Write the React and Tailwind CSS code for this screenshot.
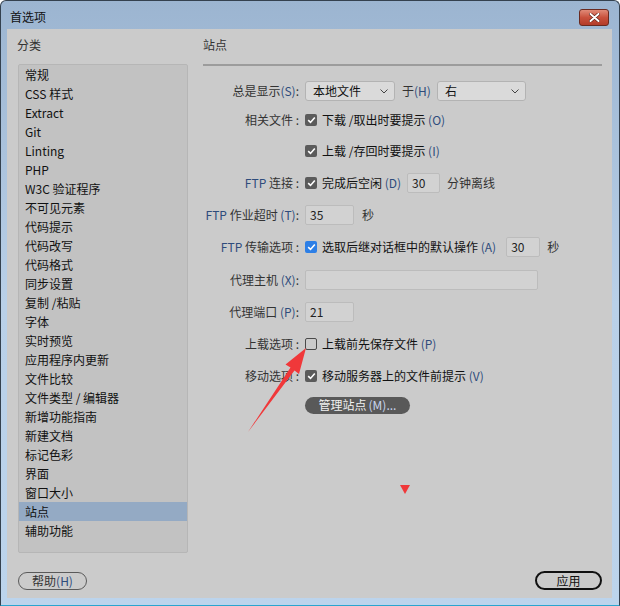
import React from "react";

const FONT = { fontFamily: '"Noto Sans CJK SC", "Noto Sans", sans-serif' };

const items = [
  "常规", "CSS 样式", "Extract", "Git", "Linting", "PHP", "W3C 验证程序", "不可见元素",
  "代码提示", "代码改写", "代码格式", "同步设置", "复制 /粘贴", "字体", "实时预览",
  "应用程序内更新", "文件比较", "文件类型 / 编辑器", "新增功能指南", "新建文档",
  "标记色彩", "界面", "窗口大小", "站点", "辅助功能",
];

function M({ children }) {
  return <span className="text-[#2e4c7c]">{children}</span>;
}

function Check({ kind = "dark" }) {
  if (kind === "empty") {
    return <span className="w-[12px] h-[12px] rounded-[2px] border border-[#4a4a4a] shrink-0" />;
  }
  const bg = kind === "blue" ? "bg-[#2d7fe6]" : "bg-[#5b5b5b]";
  return (
    <span className={`w-[12px] h-[12px] rounded-[2px] ${bg} shrink-0 flex items-center justify-center`}>
      <svg width="9" height="8" viewBox="0 0 9 8">
        <path d="M1.2 4.2 L3.5 6.4 L7.8 1.4" fill="none" stroke="#fff" strokeWidth="1.6" />
      </svg>
    </span>
  );
}

function Select({ w, text }) {
  return (
    <div className={`${w} h-[20px] rounded-[3px] border border-[#b3b3b3] bg-[#dadada] flex items-center justify-between pl-[7px] pr-[6px]`}>
      <span className="text-[12px] text-[#111]">{text}</span>
      <svg width="8" height="5" viewBox="0 0 8 5">
        <path d="M0.5 0.5 L4 4 L7.5 0.5" fill="none" stroke="#444" strokeWidth="1" />
      </svg>
    </div>
  );
}

function Input({ w, text = "" }) {
  return (
    <div className={`${w} h-[20px] rounded-[2px] border border-[#bcbcbc] bg-[#d2d2d2] flex items-center pl-[4px]`}>
      <span className="text-[12px] text-[#222]">{text}</span>
    </div>
  );
}

function Row({ h, label, children }) {
  return (
    <div className={`${h} flex items-center`}>
      <div className="w-[97px] text-right text-[12px] text-[#333] whitespace-nowrap pr-[1px]">{label}</div>
      <div className="ml-[5px] flex items-center text-[12px] text-[#111] whitespace-nowrap">{children}</div>
    </div>
  );
}

export default function App() {
  return (
    <div
      style={FONT}
      className="relative w-[620px] h-[606px] overflow-hidden rounded-t-[6px] border border-[#34414f] border-b-[#2aa5cf] bg-gradient-to-b from-[#9cb5d1] via-[#b9d0e8] to-[#bcd4ec] flex flex-col"
    >
      {/* title bar */}
      <div className="h-[28px] shrink-0 flex items-center justify-between pl-[9px] pr-[10px] pt-[4px]">
        <span className="text-[12px] text-[#111]">首选项</span>
        <div className="w-[30px] h-[17px] rounded-[3px] border border-[#6a2a20] bg-gradient-to-b from-[#e08a78] via-[#c9513d] to-[#b23c2a] flex items-center justify-center">
          <svg width="11" height="9" viewBox="0 0 11 9">
            <path d="M1.5 1 L9.5 8 M9.5 1 L1.5 8" stroke="#5a1a12" strokeWidth="3.2" strokeLinecap="round" />
            <path d="M1.5 1 L9.5 8 M9.5 1 L1.5 8" stroke="#fff" strokeWidth="2" strokeLinecap="round" />
          </svg>
        </div>
      </div>

      {/* content */}
      <div className="flex-1 ml-[6px] mr-[7px] mb-[7px] bg-[#cbcbcb] flex flex-col pt-[8px]">
        <div className="flex">
          {/* left */}
          <div className="w-[180px] pl-[10px] flex flex-col">
            <div className="h-[16px] leading-[16px] text-[12px] text-[#333]">分类</div>
            <div className="mt-[11px] ml-[1px] w-[170px] h-[489px] border border-[#b6b6b6] rounded-[2px] bg-[#c2c2c2] flex flex-col">
              {items.map((t) => (
                <div
                  key={t}
                  className={`h-[19px] shrink-0 flex items-center pl-[6px] text-[12px] text-[#111] ${t === "站点" ? "bg-[#94aac4]" : ""}`}
                >
                  {t}
                </div>
              ))}
            </div>
          </div>

          {/* right */}
          <div className="ml-[16px] w-[399px] flex flex-col">
            <div className="h-[16px] leading-[16px] text-[12px] text-[#333]">站点</div>
            <div className="mt-[11px] h-[2px] bg-[#9c9c9c]" />
            <div className="mt-[12px] flex flex-col">
              <Row h="h-[26px]" label={<>总是显示<M>(S)</M>:</>}>
                <Select w="w-[90px]" text="本地文件" />
                <span className="ml-[7px] mr-[6px] text-[#333]">于<M>(H)</M></span>
                <Select w="w-[89px]" text="右" />
              </Row>
              <Row h="h-[32px]" label="相关文件 :">
                <Check />
                <span className="ml-[5px]">下载 /取出时要提示 <M>(O)</M></span>
              </Row>
              <Row h="h-[30px]" label="">
                <Check />
                <span className="ml-[5px]">上载 /存回时要提示 <M>(I)</M></span>
              </Row>
              <Row h="h-[34px]" label={<><span className="text-[#2e4c7c]">FTP</span> 连接 :</>}>
                <Check />
                <span className="ml-[5px]">完成后空闲 <M>(D)</M></span>
                <div className="ml-[6px]"><Input w="w-[33px]" text="30" /></div>
                <span className="ml-[7px] text-[#333]">分钟离线</span>
              </Row>
              <Row h="h-[30px]" label={<><span className="text-[#2e4c7c]">FTP</span> 作业超时 <M>(T)</M>:</>}>
                <Input w="w-[49px]" text="35" />
                <span className="ml-[8px] text-[#333]">秒</span>
              </Row>
              <Row h="h-[34px]" label={<><span className="text-[#2e4c7c]">FTP</span> 传输选项 :</>}>
                <Check kind="blue" />
                <span className="ml-[5px]">选取后继对话框中的默认操作 <M>(A)</M></span>
                <div className="ml-[10px]"><Input w="w-[34px]" text="30" /></div>
                <span className="ml-[7px] text-[#333]">秒</span>
              </Row>
              <Row h="h-[32px]" label={<>代理主机 <M>(X)</M>:</>}>
                <Input w="w-[233px]" />
              </Row>
              <Row h="h-[32px]" label={<>代理端口 <M>(P)</M>:</>}>
                <Input w="w-[49px]" text="21" />
              </Row>
              <Row h="h-[32px]" label="上载选项 :">
                <Check kind="empty" />
                <span className="ml-[5px]">上载前先保存文件 <M>(P)</M></span>
              </Row>
              <Row h="h-[32px]" label="移动选项 :">
                <Check />
                <span className="ml-[5px]">移动服务器上的文件前提示 <M>(V)</M></span>
              </Row>
              <Row h="h-[26px]" label="">
                <div className="w-[105px] h-[17px] rounded-full bg-[#595959] flex items-center justify-center text-[12px] text-[#f0f0f0]">
                  管理站点 <span className="text-[#c8d6ee] ml-[2px]">(M)...</span>
                </div>
              </Row>
            </div>
          </div>
        </div>

        {/* bottom buttons */}
        <div className="mt-[18px] flex items-center justify-between pl-[11px] pr-[10px]">
          <div className="w-[69px] h-[18px] rounded-full border-[1.5px] border-[#5a5a5a] flex items-center justify-center text-[12px] text-[#333]">
            帮助 <M>(H)</M>
          </div>
          <div className="w-[67px] h-[19px] rounded-full border-2 border-[#111] flex items-center justify-center text-[12px] text-[#111]">
            应用
          </div>
        </div>
      </div>

      {/* annotations */}
      <svg className="absolute left-0 top-0 pointer-events-none" width="620" height="606" viewBox="0 0 620 606">
        <polygon
          points="305,347 298,373 293.5,369.5 247,431 289.5,366.5 284.5,363.5"
          fill="#f0383a"
        />
        <polygon points="399,484 409,484 404,493" fill="#f0383a" />
      </svg>
    </div>
  );
}
